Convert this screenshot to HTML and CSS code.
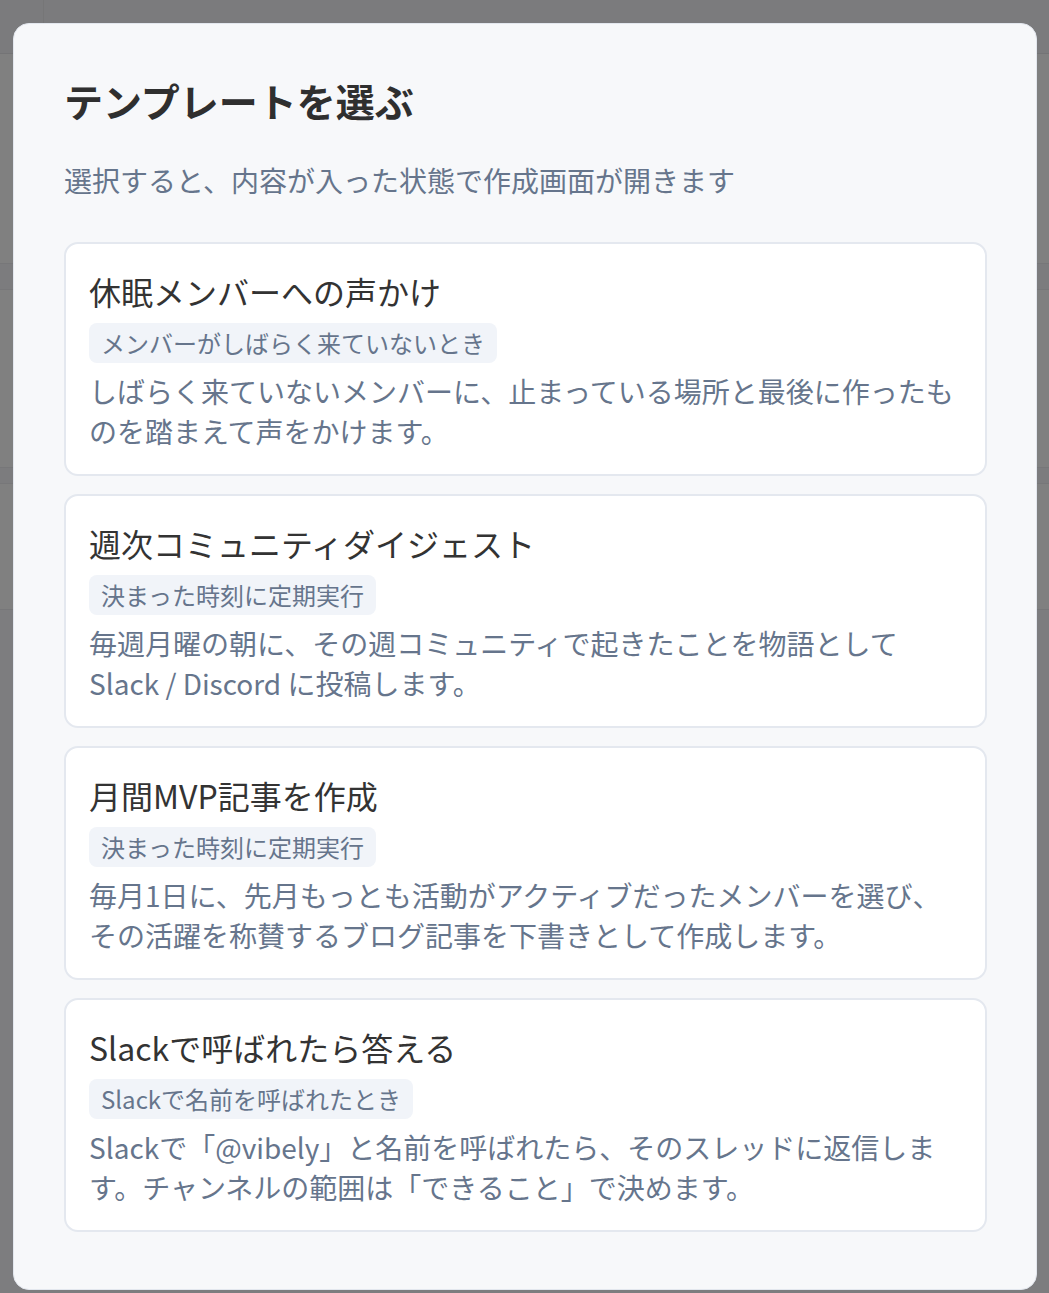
FILE: index.html
```html
<!DOCTYPE html>
<html lang="ja">
<head>
<meta charset="utf-8">
<title>テンプレートを選ぶ</title>
<link rel="stylesheet" href="styles.css">
</head>
<body>
<div class="backdrop">
  <div class="modal">
    <h1 class="modal-title">テンプレートを選ぶ</h1>
    <p class="modal-sub">選択すると、内容が入った状態で作成画面が開きます</p>
    <div class="list">
      <div class="card">
        <div class="card-title">休眠メンバーへの声かけ</div>
        <span class="tag">メンバーがしばらく来ていないとき</span>
        <p class="card-desc">しばらく来ていないメンバーに、止まっている場所と最後に作ったものを踏まえて声をかけます。</p>
      </div>
      <div class="card">
        <div class="card-title">週次コミュニティダイジェスト</div>
        <span class="tag">決まった時刻に定期実行</span>
        <p class="card-desc">毎週月曜の朝に、その週コミュニティで起きたことを物語として<br>Slack / Discord に投稿します。</p>
      </div>
      <div class="card">
        <div class="card-title">月間MVP記事を作成</div>
        <span class="tag">決まった時刻に定期実行</span>
        <p class="card-desc">毎月1日に、先月もっとも活動がアクティブだったメンバーを選び、<br>その活躍を称賛するブログ記事を下書きとして作成します。</p>
      </div>
      <div class="card">
        <div class="card-title">Slackで呼ばれたら答える</div>
        <span class="tag">Slackで名前を呼ばれたとき</span>
        <p class="card-desc">Slackで「@vibely」と名前を呼ばれたら、そのスレッドに返信します。チャンネルの範囲は「できること」で決めます。</p>
      </div>
    </div>
  </div>
</div>
</body>
</html>
```

FILE: styles.css
```css
* { box-sizing: border-box; }
html, body { margin: 0; padding: 0; }
body {
  width: 1049px;
  height: 1293px;
  overflow: hidden;
  font-family: "Noto Sans CJK JP", "Noto Sans", sans-serif;
  background-color: #808080;
  background-image:
    linear-gradient(to right, transparent 43px, #767677 43px, #767677 44px, transparent 44px),
    linear-gradient(to bottom,
      #7b7b7d 0, #7b7b7d 53px, #747476 53px, #747476 54px, transparent 54px,
      transparent 263px, #777779 263px, #777779 264px, #7c7c7e 264px, #7c7c7e 289px, #777779 289px, #777779 290px, transparent 290px,
      transparent 467px, #777779 467px, #777779 468px, #7c7c7e 468px, #7c7c7e 483px, #777779 483px, #777779 484px, transparent 484px,
      transparent 609px, #777779 609px, #777779 610px, #7d7d7f 610px);
  background-size: 100% 23px, 100% 100%;
  background-repeat: no-repeat;
}
.backdrop {
  padding: 23px 12px 0 13px;
}
.modal {
  width: 1024px;
  background: #f7f8fa;
  border: 1px solid #e3e7ee;
  border-radius: 16px;
  padding: 50px 49px 57px 50px;
}
.modal-title {
  margin: 0;
  font-size: 39px;
  line-height: 53px;
  font-weight: 700;
  color: #2f2f2f;
}
.modal-sub {
  margin: 32px 0 41px 0;
  font-size: 28px;
  line-height: 42px;
  color: #66758c;
}
.list {
  display: flex;
  flex-direction: column;
  gap: 18px;
}
.card {
  background: #ffffff;
  border: 2px solid #e4e8ef;
  border-radius: 14px;
  padding: 23px 24px 23px 23px;
  height: 234px;
  display: flex;
  flex-direction: column;
  align-items: flex-start;
}
.card-title {
  font-size: 32px;
  line-height: 48px;
  color: #333333;
}
.tag {
  margin-top: 8px;
  display: inline-block;
  background: #f1f4f9;
  color: #66758c;
  font-size: 24px;
  line-height: 32px;
  padding: 4px 12px;
  border-radius: 8px;
}
.card-desc {
  margin: 8px 0 0 0;
  font-size: 28px;
  line-height: 40px;
  color: #66758c;
}
```
